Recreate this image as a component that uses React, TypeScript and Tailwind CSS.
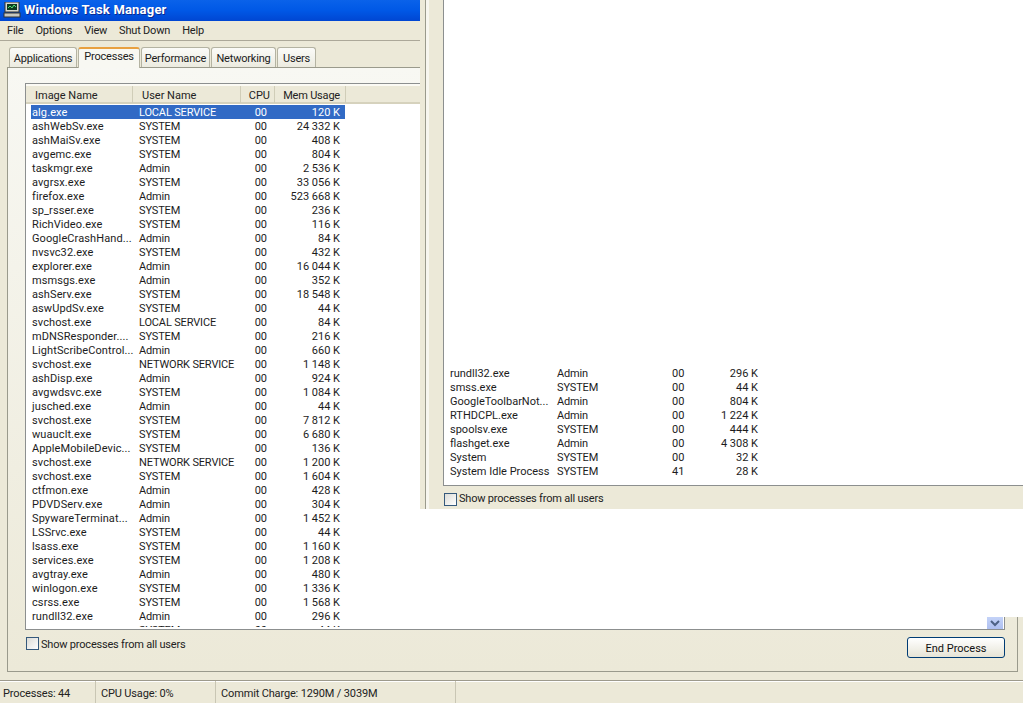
const font = { fontFamily: 'Roboto, "Liberation Sans", Arial, sans-serif' };

type Proc = [string, string, string, string];

const rows: Proc[] = [
  ['alg.exe', 'LOCAL SERVICE', '00', '120 K'],
  ['ashWebSv.exe', 'SYSTEM', '00', '24 332 K'],
  ['ashMaiSv.exe', 'SYSTEM', '00', '408 K'],
  ['avgemc.exe', 'SYSTEM', '00', '804 K'],
  ['taskmgr.exe', 'Admin', '00', '2 536 K'],
  ['avgrsx.exe', 'SYSTEM', '00', '33 056 K'],
  ['firefox.exe', 'Admin', '00', '523 668 K'],
  ['sp_rsser.exe', 'SYSTEM', '00', '236 K'],
  ['RichVideo.exe', 'SYSTEM', '00', '116 K'],
  ['GoogleCrashHand...', 'Admin', '00', '84 K'],
  ['nvsvc32.exe', 'SYSTEM', '00', '432 K'],
  ['explorer.exe', 'Admin', '00', '16 044 K'],
  ['msmsgs.exe', 'Admin', '00', '352 K'],
  ['ashServ.exe', 'SYSTEM', '00', '18 548 K'],
  ['aswUpdSv.exe', 'SYSTEM', '00', '44 K'],
  ['svchost.exe', 'LOCAL SERVICE', '00', '84 K'],
  ['mDNSResponder....', 'SYSTEM', '00', '216 K'],
  ['LightScribeControl...', 'Admin', '00', '660 K'],
  ['svchost.exe', 'NETWORK SERVICE', '00', '1 148 K'],
  ['ashDisp.exe', 'Admin', '00', '924 K'],
  ['avgwdsvc.exe', 'SYSTEM', '00', '1 084 K'],
  ['jusched.exe', 'Admin', '00', '44 K'],
  ['svchost.exe', 'SYSTEM', '00', '7 812 K'],
  ['wuauclt.exe', 'SYSTEM', '00', '6 680 K'],
  ['AppleMobileDevic...', 'SYSTEM', '00', '136 K'],
  ['svchost.exe', 'NETWORK SERVICE', '00', '1 200 K'],
  ['svchost.exe', 'SYSTEM', '00', '1 604 K'],
  ['ctfmon.exe', 'Admin', '00', '428 K'],
  ['PDVDServ.exe', 'Admin', '00', '304 K'],
  ['SpywareTerminat...', 'Admin', '00', '1 452 K'],
  ['LSSrvc.exe', 'SYSTEM', '00', '44 K'],
  ['lsass.exe', 'SYSTEM', '00', '1 160 K'],
  ['services.exe', 'SYSTEM', '00', '1 208 K'],
  ['avgtray.exe', 'Admin', '00', '480 K'],
  ['winlogon.exe', 'SYSTEM', '00', '1 336 K'],
  ['csrss.exe', 'SYSTEM', '00', '1 568 K'],
  ['rundll32.exe', 'Admin', '00', '296 K'],
  ['smss.exe', 'SYSTEM', '00', '44 K'],
];

const tailRows: Proc[] = [
  ['rundll32.exe', 'Admin', '00', '296 K'],
  ['smss.exe', 'SYSTEM', '00', '44 K'],
  ['GoogleToolbarNot...', 'Admin', '00', '804 K'],
  ['RTHDCPL.exe', 'Admin', '00', '1 224 K'],
  ['spoolsv.exe', 'SYSTEM', '00', '444 K'],
  ['flashget.exe', 'Admin', '00', '4 308 K'],
  ['System', 'SYSTEM', '00', '32 K'],
  ['System Idle Process', 'SYSTEM', '41', '28 K'],
];

function Tab({ label, width }: { label: string; width: string }) {
  return (
    <div className={`${width} h-[20px] border border-b-0 border-[#b4b3a2] rounded-t-[3px] bg-linear-to-b from-[#fbfbf8] to-[#ecebe0] text-center leading-[21px] tracking-[-0.2px] text-[#1c1c1c]`}>
      {label}
    </div>
  );
}

function Checkbox() {
  return <div className="w-[13px] h-[13px] shrink-0 border border-[#35597c] bg-linear-to-br from-[#dcdcd7] to-white" />;
}

function HeaderCell({ label, width, className }: { label: string; width: string; className: string }) {
  return (
    <div className={`${width} h-[17px] shrink-0 border-r border-[#d0cdb8] leading-[20px] ${className}`}>
      {label}
    </div>
  );
}

export default function App() {
  return (
    <div style={font} className="relative w-[1023px] h-[703px] overflow-hidden bg-[#ece9d8] text-[11px] text-[#1c1c1c] flex flex-col">
      <div className="h-[21px] shrink-0 bg-linear-to-b from-[#0a62ea] via-[#0058e6] to-[#0046d2] flex items-center pl-[3px] gap-[3px]">
        <svg width="18" height="17" viewBox="0 0 18 17">
          <rect x="2" y="0" width="14" height="10" fill="#d8d8d0" stroke="#333" />
          <rect x="4" y="2" width="10" height="6" fill="#0c3a20" />
          <path d="M5 6l2-2 2 2 2-3 2 2" stroke="#4fe070" fill="none" />
          <rect x="1" y="11" width="16" height="4" fill="#c8c8c0" stroke="#333" />
        </svg>
        <span className="mb-[2px] text-[13px] font-bold tracking-[0.2px] text-white [text-shadow:1px_1px_#0a2a90]">Windows Task Manager</span>
      </div>

      <div className="h-[20px] shrink-0 border-b border-[#aca899] flex items-center pl-[7px] pt-[1px] gap-[12px] tracking-[-0.2px] text-[#222]">
        <span>File</span>
        <span>Options</span>
        <span>View</span>
        <span>Shut Down</span>
        <span>Help</span>
      </div>

      <div className="h-[26px] shrink-0 flex items-end pl-[9px] gap-[1px]">
        <Tab label="Applications" width="w-[68px]" />
        <div className="w-[62px] h-[21px] -mb-[1px] relative z-10 border-x border-[#b4b3a2] border-t-2 border-t-[#e8a040] rounded-t-[3px] bg-[#f8f8f2] text-center leading-[15px] tracking-[-0.2px] text-[#1c1c1c]">
          Processes
        </div>
        <Tab label="Performance" width="w-[69px]" />
        <Tab label="Networking" width="w-[65px]" />
        <Tab label="Users" width="w-[39px]" />
      </div>

      <div className="ml-[7px] w-[1011px] h-[605px] shrink-0 border border-[#9a9a8c] bg-linear-to-b from-[#f8f8f3] to-[#ece9d8] pl-[17px] pt-[15px] pr-[12px]">
        <div className="h-[547px] border border-[#8c8f8f] bg-white flex flex-col">
          <div className="h-[20px] shrink-0 bg-[#ece9d8] border-t-2 border-[#fbfaf4] border-b-2 border-b-[#d6d2bd] flex text-[#222]">
            <HeaderCell label="Image Name" width="w-[107px]" className="pl-[9px]" />
            <HeaderCell label="User Name" width="w-[108px]" className="pl-[9px]" />
            <HeaderCell label="CPU" width="w-[34px]" className="text-right pr-[4px]" />
            <HeaderCell label="Mem Usage" width="w-[71px]" className="text-right pr-[5px] tracking-[-0.2px]" />
          </div>
          <div className="flex-1 pb-[2px] min-h-0">
            <div className="h-full overflow-hidden pt-[1px] pl-[5px]">
              {rows.map((r, i) => (
                <div key={i} className={`flex w-[314px] h-[14px] leading-[16px] ${i === 0 ? 'bg-[#316ac5] text-white' : ''}`}>
                  <div className="w-[108px] h-[14px] pl-[1px] whitespace-nowrap overflow-hidden tracking-[0.1px]">{r[0]}</div>
                  <div className="w-[110px] whitespace-nowrap tracking-[-0.15px]">{r[1]}</div>
                  <div className="w-[22px] text-right pr-[4px]">{r[2]}</div>
                  <div className="w-[69px] text-right">{r[3]}</div>
                </div>
              ))}
            </div>
          </div>
        </div>
        <div className="flex items-start justify-between pt-[7px] pl-[1px]">
          <div className="flex items-start gap-[2px] text-[#222]">
            <Checkbox />
            <span className="tracking-[-0.2px] leading-[16px]">Show processes from all users</span>
          </div>
          <div className="w-[98px] h-[21px] border border-[#003c74] rounded-[3px] bg-linear-to-b from-white to-[#e6e4d6] text-center leading-[21px] text-[#111]">
            End Process
          </div>
        </div>
      </div>

      <div className="mt-[8px] flex-1 border-t border-[#9d9a8c] shadow-[inset_0_1px_0_#fff]">
        <div className="h-full flex items-center tracking-[-0.15px] text-[#222]">
          <div className="w-[96px] h-full border-r border-[#c9c6b4] pl-[3px] leading-[25px]">Processes: 44</div>
          <div className="w-[120px] h-full border-r border-[#c9c6b4] pl-[5px] leading-[25px]">CPU Usage: 0%</div>
          <div className="w-[240px] h-full border-r border-[#c9c6b4] pl-[5px] leading-[25px]">Commit Charge: 1290M / 3039M</div>
        </div>
      </div>

      {/* second capture pasted over the right side */}
      <div className="absolute left-[420px] top-0 w-[603px] h-[617px] bg-white flex flex-col">
        <div className="h-[509px] shrink-0 bg-[#ece9d8] flex">
          <div className="w-[5px] shrink-0" />
          <div className="w-[1px] shrink-0 bg-[#9a9a8c]" />
          <div className="w-[3px] shrink-0 bg-[#f7f6ef]" />
          <div className="flex-1 pl-[14px]">
            <div className="h-[486px] bg-white border-l border-b border-[#8c8f8f] flex flex-col justify-end pb-[7px] pl-[6px]">
              {tailRows.map((r, i) => (
                <div key={i} className="flex h-[14px] leading-[16px]">
                  <div className="w-[107px] whitespace-nowrap">{r[0]}</div>
                  <div className="w-[115px] tracking-[-0.15px]">{r[1]}</div>
                  <div className="w-[24px]">{r[2]}</div>
                  <div className="w-[62px] text-right">{r[3]}</div>
                </div>
              ))}
            </div>
            <div className="flex items-center gap-[2px] pt-[5px] pl-[1px] text-[#222]">
              <Checkbox />
              <span className="tracking-[-0.2px]">Show processes from all users</span>
            </div>
          </div>
        </div>
      </div>

      <div className="absolute left-[987px] top-[617px] w-[16px] h-[12px] bg-linear-to-b from-[#c4d3f8] to-[#aebff0] flex items-center justify-center">
        <svg width="10" height="7" viewBox="0 0 10 7">
          <path d="M1 1l4 4 4-4" stroke="#4d6185" strokeWidth="2" fill="none" />
        </svg>
      </div>
    </div>
  );
}
